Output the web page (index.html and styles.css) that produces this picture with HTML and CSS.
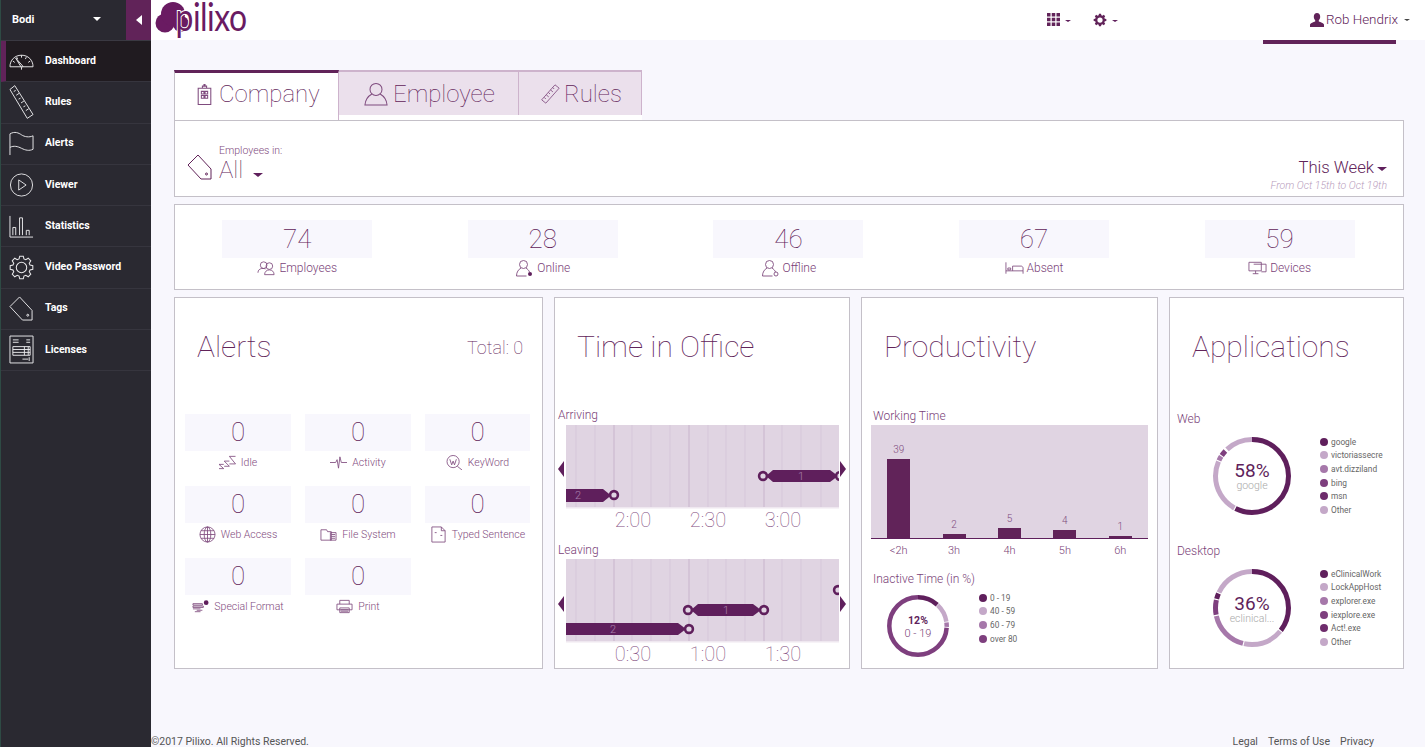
FILE: index.html
```html
<!DOCTYPE html>
<html lang="en">
<head>
<meta charset="utf-8">
<title>Pilixo Dashboard</title>
<link rel="stylesheet" href="styles.css">
</head>
<body>
<svg class="defs" width="0" height="0" aria-hidden="true">
  <defs>
    <symbol id="i-gear" viewBox="0 0 24 24"><polygon points="20.17,9.66 22.86,10.28 22.86,13.72 20.17,14.34 19.43,16.12 20.9,18.47 18.47,20.9 16.12,19.43 14.34,20.17 13.72,22.86 10.28,22.86 9.66,20.17 7.88,19.43 5.53,20.9 3.1,18.47 4.57,16.12 3.83,14.34 1.14,13.72 1.14,10.28 3.83,9.66 4.57,7.88 3.1,5.53 5.53,3.1 7.88,4.57 9.66,3.83 10.28,1.14 13.72,1.14 14.34,3.83 16.12,4.57 18.47,3.1 20.9,5.53 19.43,7.88"/><circle cx="12" cy="12" r="5"/></symbol>
    <symbol id="i-tag" viewBox="0 0 26 26"><path d="M1 11 11 1l13 14v10H14z"/><circle cx="19.5" cy="20" r="1"/></symbol>
    <symbol id="i-person" viewBox="0 0 26 26"><circle cx="13" cy="8" r="6.5"/><path d="M8.5 13C5 15 1.5 19 1 25h24c-.5-6-4-10-7.500-12"/></symbol>
    <symbol id="i-ruler" viewBox="0 0 24 24"><path d="M18 1l5 4L7 23l-5-4zM15 4l2 2M12.500 7l3 2.500M10 10l2 2M7.500 13l3 2.500M5 16l2 2"/></symbol>
    <g id="grid-lines">
      <rect x="11" width="273" height="82" class="chart-bg"/>
      <rect x="11" y="82" width="273" height="1.500" class="chart-base"/>
      <path class="grid-soft" d="M21 0v82M40 0v82M77 0v82M96 0v82M115 0v82M153 0v82M171 0v82M190 0v82M227 0v82M246 0v82M266 0v82"/>
      <path class="grid-strong" d="M59 0v82M134 0v82M209 0v82"/>
    </g>
    <clipPath id="chart-clip"><rect x="11" width="273" height="82"/></clipPath>
  </defs>
</svg>

<aside class="sidebar">
  <div class="side-top">
    <div class="org"><span class="org-name">Bodi</span><span class="caret caret-white"></span></div>
    <div class="collapse"><span class="caret-left"></span></div>
  </div>
  <nav class="nav">
    <a class="nav-item active"><svg class="nav-ico" viewBox="0 0 26 24"><path d="M1 18h24c0-7-5-12-12-12S1 11 1 18zM4 12l2 1.500M8 8l1 2M13 6v2.500M18 8l-1 2M22 12l-2 1.500M7 9l6 10 1.500-1.500zM13 19v2"/></svg><span>Dashboard</span></a>
    <a class="nav-item"><svg class="nav-ico nav-ico-ruler" viewBox="0 0 26 36"><path d="M6 1 1 5l18 30 6-4zM5 7l2-1M7.500 11l3-2M10 15l2-1M12.500 19l3-2M15 23l2-1M17.500 27l3-2"/></svg><span>Rules</span></a>
    <a class="nav-item"><svg class="nav-ico nav-ico-tall" viewBox="0 0 26 26"><path d="M1 25V3c5-3 9-1 12 1s8 3 12 1v14c-4 2-8 1-12-1s-8-3-12-1"/></svg><span>Alerts</span></a>
    <a class="nav-item"><svg class="nav-ico" viewBox="0 0 26 26"><circle cx="13" cy="13" r="12"/><path d="M10 7.500 18 13l-8 5.500z"/></svg><span>Viewer</span></a>
    <a class="nav-item"><svg class="nav-ico nav-ico-tall" viewBox="0 0 26 24"><path d="M1 1v22h24M4 21v-8h3v8M11 21V3h3v18M18 21v-5h3v5"/></svg><span>Statistics</span></a>
    <a class="nav-item"><svg class="nav-ico nav-ico-tall"><use href="#i-gear"/></svg><span>Video Password</span></a>
    <a class="nav-item"><svg class="nav-ico nav-ico-tall"><use href="#i-tag"/></svg><span>Tags</span></a>
    <a class="nav-item"><svg class="nav-ico nav-ico-lic" viewBox="0 0 26 30"><path d="M1 1h24v28H1zM4 12h18v9H4zM4 15h18M4 18h18M16 12v9M20 12v9M4 5h6M4 7.500h6M18 5h4M18 7.500h4M14 25h6M21 23v4"/></svg><span>Licenses</span></a>
  </nav>
</aside>

<div class="main">
  <header class="topbar">
    <svg class="logo" viewBox="0 0 115 40" aria-label="pilixo">
      <g class="logo-cloud"><circle cx="11" cy="23" r="9.500"/><circle cx="19" cy="14" r="12"/><circle cx="27" cy="24" r="8"/></g>
      <text class="logo-text" transform="translate(21.500 31) scale(.84 1)">pilixo</text>
    </svg>
    <div class="tools">
      <div class="tool">
        <svg class="tool-ico grid-ico" viewBox="0 0 13 13"><path d="M0 0h3.500v3.500H0zM4.750 0h3.500v3.500h-3.500zM9.500 0H13v3.500H9.500zM0 4.750h3.500v3.500H0zM4.750 4.750h3.500v3.500h-3.500zM9.500 4.750H13v3.500H9.500zM0 9.500h3.500V13H0zM4.750 9.500h3.500V13h-3.500zM9.500 9.500H13V13H9.500z"/></svg>
        <span class="caret caret-small"></span>
      </div>
      <div class="tool">
        <svg class="tool-ico gear-ico" viewBox="0 0 24 24"><polygon points="20.17,9.66 22.86,10.28 22.86,13.72 20.17,14.34 19.43,16.12 20.9,18.47 18.47,20.9 16.12,19.43 14.34,20.17 13.72,22.86 10.28,22.86 9.66,20.17 7.88,19.43 5.53,20.9 3.1,18.47 4.57,16.12 3.83,14.34 1.14,13.72 1.14,10.28 3.83,9.66 4.57,7.88 3.1,5.53 5.53,3.1 7.88,4.57 9.66,3.83 10.28,1.14 13.72,1.14 14.34,3.83 16.12,4.57 18.47,3.1 20.9,5.53 19.43,7.88"/><circle class="gear-hole" cx="12" cy="12" r="4.500"/></svg>
        <span class="caret caret-small"></span>
      </div>
    </div>
    <div class="user">
      <svg class="user-ico" viewBox="0 0 14 14"><path d="M7 0c2 0 3.200 1.500 3.200 3.700 0 1.400-.6 2.800-1.400 3.500v1.200c1.800.7 4.700 1.500 5.200 3V14H0v-2.600c.5-1.500 3.400-2.300 5.200-3V7.200C4.400 6.500 3.800 5.100 3.800 3.700 3.800 1.500 5 0 7 0z"/></svg>
      <span class="user-name">Rob Hendrix</span>
      <span class="caret caret-small caret-dark"></span>
    </div>
  </header>

  <main class="content">
    <div class="tabs">
      <div class="tab tab-company current"><svg class="tab-ico company-ico" viewBox="0 0 14 20"><path d="M1 4h12v15.500H1zM5 4V2h4v2M6.500 2V.5h1V2M4 7h2.500v2.500H4zM7.500 7H10v2.500H7.500zM4 11h2.500v2.500H4zM7.500 11H10v2.500H7.500z"/></svg>Company</div>
      <div class="tab tab-employee"><svg class="tab-ico person-ico"><use href="#i-person"/></svg>Employee</div>
      <div class="tab tab-rules"><svg class="tab-ico ruler-ico"><use href="#i-ruler"/></svg>Rules</div>
    </div>

    <section class="panel filter">
      <div class="filter-left">
        <svg class="filter-tag"><use href="#i-tag"/></svg>
        <div class="filter-text">
          <div class="filter-label">Employees in:</div>
          <div class="filter-value">All<span class="caret caret-purple"></span></div>
        </div>
      </div>
      <div class="filter-right">
        <div class="week">This Week<span class="caret caret-purple"></span></div>
        <div class="range">From Oct 15th to Oct 19th</div>
      </div>
    </section>

    <section class="panel stats">
      <div class="stat"><div class="num-box stat-box">74</div><div class="stat-label">
        <svg class="mini" viewBox="0 0 20 16"><circle cx="7" cy="5" r="3.500"/><circle cx="13" cy="6" r="3.500"/><path d="M1 13c0-3 2-4 4-4.500M8 15c0-3 2-5 5-5s5 2 5 5zM9 9c-1-.5-2-.5-4-.5"/></svg>Employees</div></div>
      <div class="stat"><div class="num-box stat-box">28</div><div class="stat-label">
        <svg class="mini" viewBox="0 0 18 18"><circle cx="8" cy="5.500" r="4"/><path d="M5.500 9C3 10.500 1 13 1 17h10M10.500 9c1.500 1 3 2.500 3.500 4"/><circle class="dot-solid" cx="14.500" cy="15" r="2"/></svg>Online</div></div>
      <div class="stat"><div class="num-box stat-box">46</div><div class="stat-label">
        <svg class="mini" viewBox="0 0 18 18"><circle cx="8" cy="5.500" r="4"/><path d="M5.500 9C3 10.500 1 13 1 17h10M10.500 9c1.500 1 3 2.500 3.500 4"/><circle cx="14.500" cy="15" r="2"/></svg>Offline</div></div>
      <div class="stat"><div class="num-box stat-box">67</div><div class="stat-label">
        <svg class="mini" viewBox="0 0 20 14"><path d="M1 1v12M1 10h18v3M19 10V7c0-1-1-2-2-2H8v5M3 7h3v2H3z"/></svg>Absent</div></div>
      <div class="stat"><div class="num-box stat-box">59</div><div class="stat-label">
        <svg class="mini" viewBox="0 0 20 14"><path d="M1 1h13v9H1zM5 13h6M8 10v3M6 3h13v8h-5"/></svg>Devices</div></div>
    </section>

    <div class="cards">
      <section class="panel card card-alerts">
        <div class="alerts-head"><h2 class="card-title">Alerts</h2><div class="total">Total: 0</div></div>
        <div class="alert-grid">
          <div class="alert"><div class="num-box alert-box">0</div><div class="alert-label"><svg class="mini" viewBox="0 0 18 14"><path d="M0 13.500h5L0 9h5M5.500 11H11L5.500 5.500H11M11 8.500h6.500L11 .5h6.500"/></svg>Idle</div></div>
          <div class="alert"><div class="num-box alert-box">0</div><div class="alert-label"><svg class="mini" viewBox="0 0 18 14"><path d="M0 7h6l1.500-3 1.500 9 1.500-12 1.500 6h6"/></svg>Activity</div></div>
          <div class="alert"><div class="num-box alert-box">0</div><div class="alert-label"><svg class="mini" viewBox="0 0 18 16"><circle cx="7.500" cy="7" r="6.500"/><path d="M12 12l5 4M4 4.500l2 6 1.500-4 1.500 4 2-6"/></svg>KeyWord</div></div>
          <div class="alert"><div class="num-box alert-box">0</div><div class="alert-label"><svg class="mini mini-globe" viewBox="0 0 18 18"><circle cx="9" cy="9" r="8"/><ellipse cx="9" cy="9" rx="3.500" ry="8"/><path d="M9 1v16M1 9h16M2 5h14M2 13h14"/></svg>Web Access</div></div>
          <div class="alert"><div class="num-box alert-box">0</div><div class="alert-label"><svg class="mini" viewBox="0 0 18 14"><path d="M1 2h6l1 2h4v9H1zM11 5h6v8h-6zM12 7h4M12 9h4M12 11h4"/></svg>File System</div></div>
          <div class="alert"><div class="num-box alert-box">0</div><div class="alert-label"><svg class="mini mini-globe" viewBox="0 0 16 18"><path d="M1 1h10l4 4v12H1zM11 1v4h4M4 7h2M10 10h2"/></svg>Typed Sentence</div></div>
          <div class="alert"><div class="num-box alert-box">0</div><div class="alert-label"><svg class="mini" viewBox="0 0 18 14"><path d="M1 4h10v1.500H1zM1 6.500h11v1.500H1zM1 9.500h8M3 12.500h6M5 11h6"/><circle class="dot-solid" cx="15" cy="3" r="2.500"/></svg>Special Format</div></div>
          <div class="alert"><div class="num-box alert-box">0</div><div class="alert-label"><svg class="mini" viewBox="0 0 18 15"><path d="M4 5V1h10v4M1 5h16v6H1zM4 9h10v5H4zM5 11h8M5 12.500h8"/></svg>Print</div></div>
        </div>
      </section>

      <section class="panel card card-time">
        <h2 class="card-title">Time in Office</h2>
        <div class="sub-label time-first">Arriving</div>
        <svg class="timeline" viewBox="0 0 294 108">
          <use href="#grid-lines"/>
          <g clip-path="url(#chart-clip)">
            <polygon class="bar" points="11,64 48,64 56,70.500 48,77 11,77"/>
            <circle class="knob" cx="59" cy="70" r="3.900"/>
            <polygon class="bar" points="211,51 218,45 275,45 283,51 275,57 218,57"/>
            <circle class="knob" cx="208" cy="51" r="3.900"/>
            <circle class="knob" cx="285" cy="51" r="3.900"/>
            <text class="bar-num" x="23" y="74">2</text>
            <text class="bar-num" x="246" y="55">1</text>
          </g>
          <polygon class="arrow" points="9,36 9,52 3,44"/>
          <polygon class="arrow" points="285,36 285,52 291,44"/>
          <text class="axis" x="78" y="102">2:00</text>
          <text class="axis" x="153" y="102">2:30</text>
          <text class="axis" x="228" y="102">3:00</text>
        </svg>
        <div class="sub-label time-second">Leaving</div>
        <svg class="timeline" viewBox="0 0 294 108">
          <use href="#grid-lines"/>
          <g clip-path="url(#chart-clip)">
            <polygon class="bar" points="11,64 123,64 131,70 123,76 11,76"/>
            <circle class="knob" cx="134" cy="70" r="3.900"/>
            <polygon class="bar" points="136,51 143,45 198,45 206,51 198,57 143,57"/>
            <circle class="knob" cx="133" cy="51" r="3.900"/>
            <circle class="knob" cx="209" cy="51" r="3.900"/>
            <circle class="knob" cx="283" cy="31" r="3.900"/>
            <text class="bar-num" x="58" y="74">2</text>
            <text class="bar-num" x="171" y="55">1</text>
          </g>
          <polygon class="arrow" points="9,37 9,53 3,45"/>
          <polygon class="arrow" points="285,37 285,53 291,45"/>
          <text class="axis" x="78" y="102">0:30</text>
          <text class="axis" x="153" y="102">1:00</text>
          <text class="axis" x="228" y="102">1:30</text>
        </svg>
      </section>

      <section class="panel card card-prod">
        <h2 class="card-title">Productivity</h2>
        <div class="sub-label prod-first">Working Time</div>
        <div class="bars">
          <div class="col"><span class="col-val">39</span><span class="col-bar" style="height:79px"></span></div>
          <div class="col"><span class="col-val">2</span><span class="col-bar" style="height:4px"></span></div>
          <div class="col"><span class="col-val">5</span><span class="col-bar" style="height:10px"></span></div>
          <div class="col"><span class="col-val">4</span><span class="col-bar" style="height:8px"></span></div>
          <div class="col"><span class="col-val">1</span><span class="col-bar" style="height:2px"></span></div>
        </div>
        <div class="bar-labels"><span>&lt;2h</span><span>3h</span><span>4h</span><span>5h</span><span>6h</span></div>
        <div class="sub-label prod-second">Inactive Time (in %)</div>
        <div class="inactive">
          <svg class="donut-small" viewBox="0 0 66 66">
            <g transform="rotate(-90 33 33)">
              <circle class="seg s1" cx="33" cy="33" r="28.700" pathLength="100" stroke-dasharray="11.700 100"/>
              <circle class="seg s2" cx="33" cy="33" r="28.700" pathLength="100" stroke-dasharray="10.500 100" stroke-dashoffset="-12"/>
              <circle class="seg s3" cx="33" cy="33" r="28.700" pathLength="100" stroke-dasharray="2.500 100" stroke-dashoffset="-23"/>
              <circle class="seg s4" cx="33" cy="33" r="28.700" pathLength="100" stroke-dasharray="74 100" stroke-dashoffset="-26"/>
            </g>
            <text class="d-small-num" x="33" y="31">12%</text>
            <text class="d-small-sub" x="33" y="44">0 - 19</text>
          </svg>
          <ul class="legend legend-inactive">
            <li><i class="d1"></i>0 - 19</li>
            <li><i class="d2"></i>40 - 59</li>
            <li><i class="d3"></i>60 - 79</li>
            <li><i class="d4"></i>over 80</li>
          </ul>
        </div>
      </section>

      <section class="panel card card-apps">
        <h2 class="card-title">Applications</h2>
        <div class="sub-label apps-first">Web</div>
        <div class="app-row">
          <svg class="donut" viewBox="0 0 86 86">
            <g transform="rotate(-90 43 43)">
              <circle class="seg-big s1" cx="43" cy="43" r="36.500" pathLength="100" stroke-dasharray="57.500 100"/>
              <circle class="seg-big s2" cx="43" cy="43" r="36.500" pathLength="100" stroke-dasharray="23.500 100" stroke-dashoffset="-58"/>
              <circle class="seg-big s3" cx="43" cy="43" r="36.500" pathLength="100" stroke-dasharray="2 100" stroke-dashoffset="-82"/>
              <circle class="seg-big s4" cx="43" cy="43" r="36.500" pathLength="100" stroke-dasharray="2.500 100" stroke-dashoffset="-84.500"/>
              <circle class="seg-big s2" cx="43" cy="43" r="36.500" pathLength="100" stroke-dasharray="12 100" stroke-dashoffset="-88"/>
            </g>
            <text class="d-num" x="43" y="44">58%</text>
            <text class="d-sub" x="43" y="56">google</text>
          </svg>
          <ul class="legend legend-apps">
            <li><i class="d1"></i>google</li>
            <li><i class="d2"></i>victoriassecre</li>
            <li><i class="d3"></i>avt.dizziland</li>
            <li><i class="d4"></i>bing</li>
            <li><i class="d5"></i>msn</li>
            <li><i class="d2"></i>Other</li>
          </ul>
        </div>
        <div class="sub-label apps-second">Desktop</div>
        <div class="app-row">
          <svg class="donut" viewBox="0 0 86 86">
            <g transform="rotate(-90 43 43)">
              <circle class="seg-big s1" cx="43" cy="43" r="36.500" pathLength="100" stroke-dasharray="35.500 100"/>
              <circle class="seg-big s2" cx="43" cy="43" r="36.500" pathLength="100" stroke-dasharray="17.500 100" stroke-dashoffset="-36"/>
              <circle class="seg-big s3" cx="43" cy="43" r="36.500" pathLength="100" stroke-dasharray="17.500 100" stroke-dashoffset="-54"/>
              <circle class="seg-big s4" cx="43" cy="43" r="36.500" pathLength="100" stroke-dasharray="6.500 100" stroke-dashoffset="-72"/>
              <circle class="seg-big s1" cx="43" cy="43" r="36.500" pathLength="100" stroke-dasharray="2.500 100" stroke-dashoffset="-79"/>
              <circle class="seg-big s2" cx="43" cy="43" r="36.500" pathLength="100" stroke-dasharray="18 100" stroke-dashoffset="-82"/>
            </g>
            <text class="d-num" x="43" y="45">36%</text>
            <text class="d-sub" x="43" y="57">eclinical...</text>
          </svg>
          <ul class="legend legend-apps">
            <li><i class="d1"></i>eClinicalWork</li>
            <li><i class="d2"></i>LockAppHost</li>
            <li><i class="d3"></i>explorer.exe</li>
            <li><i class="d4"></i>iexplore.exe</li>
            <li><i class="d5"></i>Act!.exe</li>
            <li><i class="d2"></i>Other</li>
          </ul>
        </div>
      </section>
    </div>
  </main>

  <footer class="footer">
    <span>©2017 Pilixo. All Rights Reserved.</span>
    <div class="footer-links"><a>Legal</a><a>Terms of Use</a><a>Privacy</a></div>
  </footer>
</div>
</body>
</html>
```
FILE: styles.css
```css
* { box-sizing: border-box; }
html, body { height: 100%; }
body {
  margin: 0;
  display: flex;
  height: 747px;
  overflow: hidden;
  background: #f8f7fd;
  font-family: Roboto, "Liberation Sans", sans-serif;
  color: #7a3f78;
}
.defs { position: absolute; }
h2 { margin: 0; }
ul { margin: 0; padding: 0; list-style: none; }

/* carets */
.caret { display: inline-block; width: 0; height: 0; border-style: solid; border-color: transparent; border-bottom-width: 0; }
.caret-white { border-width: 4px 4px 0; border-top-color: #fff; }
.caret-purple { border-width: 4.5px 5px 0; border-top-color: #5f1f5c; }
.caret-small { border-width: 2.5px 3px 0; border-top-color: #5f1f5c; }
.caret-dark { border-top-color: #444; }
.caret-left { width: 0; height: 0; border-style: solid; border-color: transparent; border-width: 5.5px 6px 5.5px 0; border-right-color: #fff; }

/* sidebar */
.sidebar { width: 151px; flex: none; background: #2a2931; border-left: 1px solid #2e4a44; }
.side-top { display: flex; height: 41px; border-bottom: 1px solid #3a3942; }
.org { flex: 1; display: flex; align-items: center; justify-content: space-between; padding: 0 25px 2px 11px; }
.org-name { color: #fff; font-size: 11px; font-weight: 700; }
.collapse { width: 25px; height: 40px; background: #612359; display: flex; align-items: center; justify-content: center; }
.nav-item { display: flex; align-items: center; height: 41.25px; padding-left: 8px; border-bottom: 1px solid #36353e; color: #fff; font-size: 10.5px; font-weight: 700; }
.nav-item span { margin: -1.500px 0 0 11px; }
.nav-item.active { background: #201b20; border-left: 5px solid #612359; padding-left: 3px; }
.nav-ico { width: 25px; height: 24px; flex: none; fill: none; stroke: #e8e8ea; stroke-width: 1; }
.nav-ico-tall { height: 27px; }
.nav-ico-ruler { height: 36px; }
.nav-ico-lic { height: 29px; }

/* topbar */
.main { flex: 1; min-width: 0; display: flex; flex-direction: column; }
.topbar { height: 40px; flex: none; background: #fff; display: flex; padding-left: 3px; }
.logo { width: 115px; height: 40px; flex: none; }
.logo-cloud { fill: #6a1b62; }
.logo-text { font-family: Lato, Roboto, sans-serif; font-weight: 400; font-size: 38px; letter-spacing: -.6px; fill: #6a1b62; stroke: #fff; stroke-width: 2px; paint-order: stroke; }
.tools { margin-left: auto; display: flex; gap: 22px; height: 40px; align-items: center; padding-bottom: 1px; }
.tool { display: flex; align-items: center; gap: 5px; }
.tool .caret { margin-top: 3px; }
.tool-ico { width: 13px; height: 13px; fill: #612359; }
.gear-ico { width: 14px; height: 14px; }
.gear-hole { fill: #fff; }
.user { width: 133px; height: 44px; margin: 0 29px 0 145px; flex: none; border-bottom: 4px solid #612359; padding: 12px 0 0 47px; display: flex; align-items: flex-start; gap: 2px; white-space: nowrap; position: relative; }
.user-ico { width: 14px; height: 14px; flex: none; fill: #612359; margin-top: 1px; }
.user-name { font-size: 13.4px; line-height: 16px; color: #612359; font-weight: 300; }
.user .caret { margin: 7px 0 0 4px; }

/* content */
.content { flex: 1; padding: 30px 21px 0 23px; min-height: 0; }
.tabs { display: flex; width: 468px; height: 50px; background: #fff; }
.tab { height: 45px; display: flex; align-items: center; font-size: 24px; font-weight: 100; color: #612359; background: #ebe0ec; border-top: 2px solid #cdb3cc; border-right: 1px solid #cdb3cc; }
.tab-company { width: 165px; height: 50px; padding: 0 0 5px 22px; background: #fff; border-top: 3px solid #612359; border-left: 1px solid #c4c0c8; border-right: 1px solid #cdb3cc; }
.tab-employee { width: 180px; padding-left: 24px; }
.tab-rules { width: 123px; padding-left: 21px; }
.tab-ico { flex: none; fill: none; stroke: #7f4b7e; stroke-width: 1; }
.company-ico { width: 15px; height: 21px; margin-right: 7px; }
.person-ico { width: 26px; height: 24px; margin-right: 4px; stroke-width: 1.100; }
.ruler-ico { width: 20px; height: 24px; margin-right: 4px; }

.panel { background: #fff; border: 1px solid #c4c0c8; }
.filter { height: 77px; display: flex; justify-content: space-between; align-items: flex-end; padding: 0 16px 3px 12px; }
.filter-left { display: flex; align-items: flex-end; margin-bottom: 10px; }
.filter-tag { width: 26px; height: 26px; fill: none; stroke: #612359; stroke-width: 1; margin-bottom: 3px; }
.filter-text { margin-left: 6px; }
.filter-label { font-size: 10.5px; font-weight: 300; line-height: 13px; color: #7f4b7e; }
.filter-value { font-size: 24px; font-weight: 100; line-height: 26px; color: #612359; display: flex; align-items: flex-end; }
.filter-value .caret { margin: 0 0 6px 10px; }
.filter-right { text-align: right; }
.week { font-size: 16.7px; font-weight: 300; line-height: 22px; color: #612359; display: flex; align-items: center; justify-content: flex-end; gap: 3px; }
.week .caret { margin-top: 2px; }
.range { font-size: 10.5px; font-weight: 300; font-style: italic; line-height: 14px; color: #b79cbc; }

.stats { height: 86px; margin-top: 7px; display: grid; grid-template-columns: repeat(5, 1fr); padding-top: 15px; }
.stat { display: flex; flex-direction: column; align-items: center; padding-right: 1.200px; }
.num-box { background: #f8f7fd; text-align: center; font-weight: 100; color: #612359; }
.stat-box { width: 150px; height: 38px; font-size: 26px; line-height: 38px; }
.stat-label { display: flex; align-items: center; justify-content: center; gap: 3px; height: 20px; font-size: 12px; font-weight: 300; color: #7a3f78; }
.stat-label .mini { width: 19px; height: 18px; }
.mini { width: 17px; height: 15px; flex: none; fill: none; stroke: #7f4b7e; stroke-width: .9; }
.mini-globe { width: 17px; height: 17px; }
.dot-solid { fill: #5f1f5c; stroke: none; }

/* cards */
.cards { display: flex; gap: 11px; margin-top: 7px; height: 372px; }
.card { padding-top: 29px; }
.card-alerts { width: 369px; padding-left: 10px; padding-right: 19px; }
.card-time { width: 296px; }
.card-prod { width: 297px; }
.card-apps { width: 235px; }
.card-title { font-size: 30px; font-weight: 100; line-height: 40px; color: #612359; }
.card-time .card-title { margin-left: 22px; }
.card-prod .card-title { margin-left: 22px; }
.card-apps .card-title { margin-left: 22px; }
.alerts-head { display: flex; justify-content: space-between; align-items: center; padding-left: 12px; }
.total { font-size: 18px; font-weight: 100; color: #612359; }
.alert-grid { display: grid; grid-template-columns: 106px 106px 105px; column-gap: 14px; grid-auto-rows: 72px; margin-top: 47px; }
.alert-box { height: 37px; font-size: 26px; line-height: 37px; }
.alert-label { display: flex; align-items: center; justify-content: center; gap: 5px; height: 22px; font-size: 10.5px; font-weight: 300; color: #7f4b7e; white-space: nowrap; }

.sub-label { font-size: 12px; font-weight: 300; line-height: 14px; color: #7a3f78; }
.time-first { margin: 41px 0 3px 3px; }
.time-second { margin: 10px 0 2px 3px; }
.timeline { display: block; width: 294px; height: 108px; }
.chart-bg { fill: #e0d4e2; }
.chart-base { fill: #efe8f0; }
.grid-soft { stroke: #d6c7da; stroke-width: 1; fill: none; }
.grid-strong { stroke: #cfbed3; stroke-width: 1.500; fill: none; }
.bar { fill: #5f1f5c; }
.knob { fill: #e0d4e2; stroke: #5f1f5c; stroke-width: 2.600; }
.arrow { fill: #5f1f5c; }
.axis { font-family: Roboto, sans-serif; font-size: 20px; font-weight: 100; fill: #7f4b7e; text-anchor: middle; }
.bar-num { font-family: Roboto, sans-serif; font-size: 11px; font-weight: 300; fill: #a87fab; text-anchor: middle; }

.prod-first { margin: 42px 0 2px 11px; }
.bars { margin-left: 9px; width: 277px; height: 114px; background: #e0d4e2; border-bottom: 1.500px solid #5f1f5c; display: grid; grid-template-columns: repeat(5, 1fr); }
.col { display: flex; flex-direction: column; justify-content: flex-end; align-items: center; }
.col-val { font-size: 10px; font-weight: 300; line-height: 12px; margin-bottom: 3px; color: #7f4b7e; }
.col-bar { width: 23px; background: #612359; }
.bar-labels { margin-left: 9px; width: 277px; display: grid; grid-template-columns: repeat(5, 1fr); text-align: center; font-size: 11px; font-weight: 300; line-height: 24px; color: #7a3f78; height: 24px; }
.prod-second { margin: 9px 0 0 11px; }
.inactive { display: flex; margin-top: 7px; }
.donut-small { width: 66px; height: 66px; margin-left: 23px; flex: none; }
.seg { fill: none; stroke-width: 4.500; }
.seg-big { fill: none; stroke-width: 5; }
.s1 { stroke: #5f1f5c; }
.s2 { stroke: #c4a8c8; }
.s3 { stroke: #a678aa; }
.s4 { stroke: #7e3f7e; }
.d-small-num { font-family: Roboto, sans-serif; font-size: 10.5px; font-weight: 700; fill: #5f1f5c; text-anchor: middle; }
.d-small-sub { font-family: Roboto, sans-serif; font-size: 11px; font-weight: 300; fill: #7a3f78; text-anchor: middle; }
.d-num { font-family: Roboto, sans-serif; font-size: 19px; font-weight: 400; fill: #5f1f5c; text-anchor: middle; }
.d-sub { font-family: Roboto, sans-serif; font-size: 10.5px; font-weight: 300; fill: #a8a8a8; text-anchor: middle; }

.legend li { display: flex; align-items: center; height: 13.600px; font-size: 8.3px; color: #666; white-space: nowrap; }
.legend i { width: 8px; height: 8px; border-radius: 50%; margin-right: 3px; flex: none; }
.d1 { background: #5f1f5c; }
.d2 { background: #c4a8c8; }
.d3 { background: #a678aa; }
.d4 { background: #7e3f7e; }
.d5 { background: #6e2c6c; }
.legend-inactive { margin: -2px 0 0 28px; }
.apps-first { margin: 45px 0 7px 7px; }
.apps-second { margin: 25px 0 7px 7px; }
.app-row { display: flex; }
.donut { width: 86px; height: 86px; flex: none; margin-left: 39px; }
.legend-apps { width: 60px; margin: 2px 0 0 25px; }

.footer { height: 14px; flex: none; margin-top: auto; display: flex; justify-content: space-between; font-size: 10.5px; line-height: 18px; color: #555; padding-right: 51px; }
.footer-links { display: flex; gap: 10px; }
```
